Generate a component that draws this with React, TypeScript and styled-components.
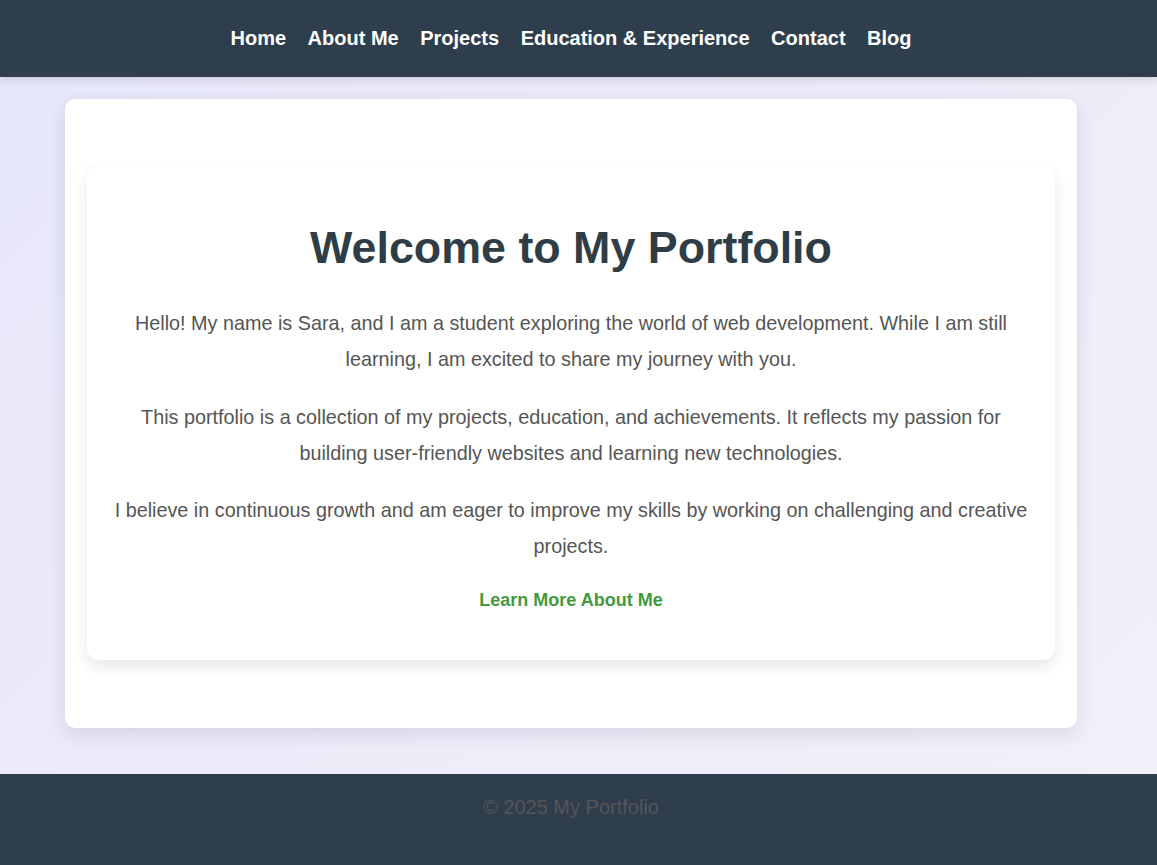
import React from "react";
import styled, { createGlobalStyle } from "styled-components";

const GlobalStyle = createGlobalStyle`
  html, body {
    margin: 0;
    padding: 0;
  }
  body {
    font-family: "Liberation Sans", Arial, Helvetica, sans-serif;
    background: linear-gradient(135deg, #e6e6fa 0%, #f2f1f8 100%);
    min-height: 100vh;
  }
  * { box-sizing: border-box; }
`;

const Page = styled.div`
  display: flex;
  flex-direction: column;
  min-height: 100vh;
`;

const Header = styled.header`
  background: #2f3e4d;
  height: 77px;
  display: flex;
  align-items: center;
  justify-content: center;
  padding-right: 15px;
  box-shadow: 0 3px 8px rgba(0, 0, 0, 0.12);
  position: relative;
  z-index: 1;
`;

const Nav = styled.nav`
  display: flex;
  gap: 21.5px;
  align-items: center;
`;

const NavLink = styled.a`
  color: #ffffff;
  font-size: 20px;
  font-weight: 700;
  line-height: 23px;
  text-decoration: none;
  white-space: nowrap;
`;

const Main = styled.main`
  padding: 22px 15px 46px 0;
`;

const OuterCard = styled.section`
  max-width: 1012px;
  margin: 0 auto;
  background: #ffffff;
  border-radius: 10px;
  padding: 68px 22px;
  box-shadow: 0 6px 18px rgba(40, 40, 80, 0.12);
`;

const InnerCard = styled.div`
  background: #ffffff;
  border-radius: 12px;
  padding: 54px 20px 49px;
  text-align: center;
  box-shadow: 0 6px 16px rgba(0, 0, 0, 0.1);
`;

const Title = styled.h1`
  margin: 0 0 32px;
  font-size: 44.8px;
  line-height: 52px;
  font-weight: 700;
  color: #2f3e46;
`;

const Para = styled.p<{ $last?: boolean }>`
  margin: 0 0 ${(p) => (p.$last ? "0" : "21.5px")};
  font-size: 19.8px;
  line-height: 36px;
  color: #555555;
`;

const LinkRow = styled.div`
  margin-top: 26px;
`;

const LearnLink = styled.a`
  font-size: 18px;
  line-height: 21px;
  font-weight: 700;
  color: #43993f;
  text-decoration: none;
`;

const Footer = styled.footer`
  background: #2f3e4d;
  color: #555555;
  text-align: center;
  font-size: 20px;
  line-height: 23px;
  padding: 22px 15px 46px 0;
  margin-top: auto;
`;

const links = [
  "Home",
  "About Me",
  "Projects",
  "Education & Experience",
  "Contact",
  "Blog",
];

export default function App() {
  return (
    <>
      <GlobalStyle />
      <Page>
        <Header>
          <Nav>
            {links.map((l) => (
              <NavLink key={l} href="#">
                {l}
              </NavLink>
            ))}
          </Nav>
        </Header>
        <Main>
          <OuterCard>
            <InnerCard>
              <Title>Welcome to My Portfolio</Title>
              <Para>
                Hello! My name is Sara, and I am a student exploring the world
                of web development. While I am still learning, I am excited to
                share my journey with you.
              </Para>
              <Para>
                This portfolio is a collection of my projects, education, and
                achievements. It reflects my passion for building user-friendly
                websites and learning new technologies.
              </Para>
              <Para $last>
                I believe in continuous growth and am eager to improve my
                skills by working on challenging and creative projects.
              </Para>
              <LinkRow>
                <LearnLink href="#">Learn More About Me</LearnLink>
              </LinkRow>
            </InnerCard>
          </OuterCard>
        </Main>
        <Footer>© 2025 My Portfolio</Footer>
      </Page>
    </>
  );
}
